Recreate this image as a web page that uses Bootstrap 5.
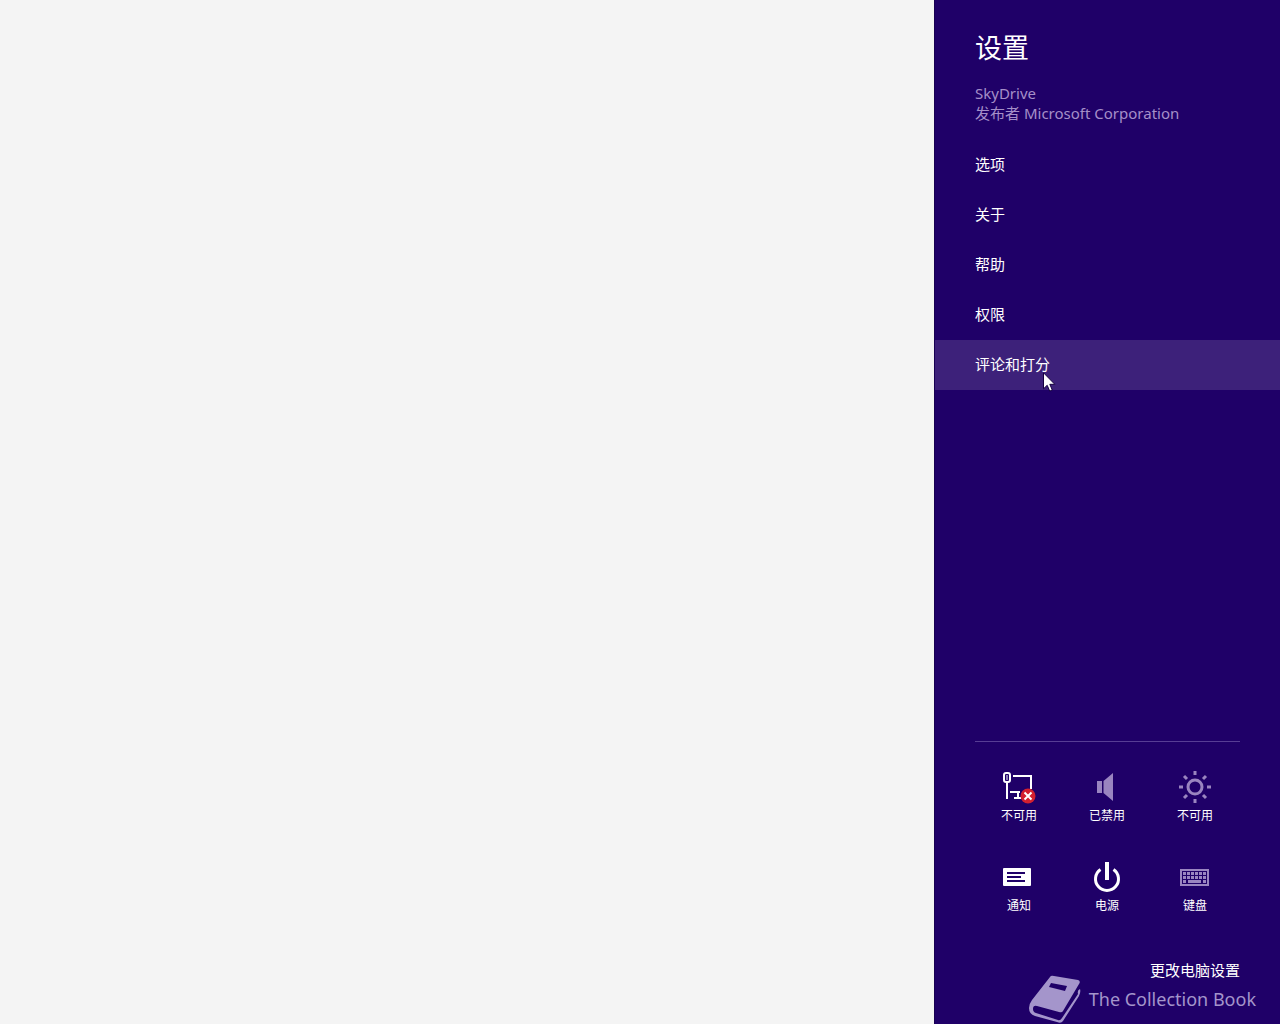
<!DOCTYPE html>
<html lang="zh-CN">
<head>
<meta charset="utf-8">
<meta name="viewport" content="width=device-width, initial-scale=1">
<title>设置</title>
<link href="https://cdn.jsdelivr.net/npm/bootstrap@5.3.0/dist/css/bootstrap.min.css" rel="stylesheet">
<style>
body{background:#f4f4f4;font-family:"Noto Sans","Noto Sans CJK SC",sans-serif;font-size:15px;line-height:20px}
.charm{width:346px;background:#1f0068;border-left:1px solid #180052;color:#fff}
.charm-head{height:140px;padding:28px 40px 0}
.charm-title{font-size:27px;line-height:40px;margin-bottom:15px;font-weight:400}
.publisher{color:#a58fc8}
.entry{height:50px;padding:0 40px 2px;color:#fff;text-decoration:none}
.entry:hover,.entry.active{background:#3d217a;color:#fff}
.quick{border-top:1px solid #573d94;padding-top:17px;margin:0 40px}
.tiles{padding-right:1px}
.tile{height:90px;padding:10px 0 0;background:none;border:0;color:#fff;font-size:12px;line-height:18px}
.tile svg{width:36px;height:36px;margin-bottom:2px}
.dim{color:#9a85c0}
.more{margin:21px 40px 44px;color:#fff;text-decoration:none}
.brandmark{right:24px;bottom:0;color:#a495cb;font-size:18px;line-height:24px;gap:8px}
.brandmark svg{width:52px;height:50px}
.pointer{left:108px;top:32px;width:13px;height:20px}
</style>
</head>
<body>
<div class="d-flex justify-content-end min-vh-100 overflow-hidden">
<aside class="charm d-flex flex-column position-relative" aria-label="设置">
<header class="charm-head">
<h1 class="charm-title">设置</h1>
<div class="publisher">SkyDrive</div>
<div class="publisher">发布者 Microsoft Corporation</div>
</header>
<nav class="d-flex flex-column">
<a class="entry d-flex align-items-center" href="#">选项</a>
<a class="entry d-flex align-items-center" href="#">关于</a>
<a class="entry d-flex align-items-center" href="#">帮助</a>
<a class="entry d-flex align-items-center" href="#">权限</a>
<a class="entry active d-flex align-items-center position-relative" href="#">评论和打分
<svg class="pointer position-absolute" viewBox="0 0 13 20" aria-hidden="true"><path d="M.5.8v16l3.7-3.500 2.500 5.800 2.600-1.100-2.500-5.700h5z" fill="#fff" stroke="#150040" stroke-width="1"/></svg></a>
</nav>
<section class="quick mt-auto">
<div class="tiles row row-cols-3 g-0">
<button type="button" class="tile col d-flex flex-column align-items-center">
<svg viewBox="0 0 36 36" fill="none" stroke="#fff" stroke-width="2" aria-hidden="true"><rect x="3" y="4" width="6" height="9" rx="2"/><path d="M6 13v17M12 7h18v13M9 23h10M17 23v6M13 29h7"/><path d="M6 6v5" stroke-width="1"/><circle cx="27" cy="27" r="7.500" fill="#d3202f" stroke="none"/><path d="m23.500 23.500 7 7m0-7-7 7"/></svg>不可用</button>
<button type="button" class="tile col d-flex flex-column align-items-center">
<svg class="dim" viewBox="0 0 36 36" fill="currentColor" aria-hidden="true"><path d="M8 12h5v12H8zM14.500 12 24 4v28l-9.500-8z"/></svg>已禁用</button>
<button type="button" class="tile col d-flex flex-column align-items-center">
<svg class="dim" viewBox="0 0 36 36" fill="none" stroke="currentColor" stroke-width="3" aria-hidden="true"><circle cx="18" cy="18" r="7"/><path d="M18 2v4M18 30v4M2 18h4M30 18h4M7 7l3 3M26 26l3 3M7 29l3-3M26 10l3-3"/></svg>不可用</button>
<button type="button" class="tile col d-flex flex-column align-items-center">
<svg viewBox="0 0 36 36" aria-hidden="true"><rect x="2" y="9" width="28" height="18" rx="1" fill="#fff"/><path d="M6 14h18M6 18h14M6 22h18" stroke="#1f0068" stroke-width="2"/></svg>通知</button>
<button type="button" class="tile col d-flex flex-column align-items-center">
<svg viewBox="0 0 36 36" fill="none" stroke="#fff" aria-hidden="true"><path d="M11.500 10.500a11.500 11.500 0 1 0 13 0" stroke-width="3"/><path d="M18 3v18" stroke-width="4"/></svg>电源</button>
<button type="button" class="tile col d-flex flex-column align-items-center">
<svg class="dim" viewBox="0 0 36 36" fill="none" stroke="currentColor" aria-hidden="true"><path d="M4 11h27v15H4z" stroke-width="2"/><path d="M6 14.500h23M6 18.500h23" stroke-width="3" stroke-dasharray="3 1"/><path d="M6 22.500h3M11 22.500h13M26 22.500h3" stroke-width="3"/></svg>键盘</button>
</div>
</section>
<a class="more align-self-end" href="#">更改电脑设置</a>
<div class="brandmark position-absolute d-flex align-items-center text-nowrap">
<svg viewBox="0 0 52 50" aria-hidden="true"><path d="M21 3q1-2 4-1l24 4q3 1 1 4L34 37q-1 2-4 1L8 32q-4-1-4 3 0 3 3 4l22 7q2 1 4-2l16-24q-1-4 2-5 1 3-1 7L34 47q-2 3-6 1L6 42q-6-2-6-8 0-4 3-8z" fill="currentColor"/><path d="m22 9 16 3-2 5-16-4z" fill="#1f0068"/></svg>
<span>The Collection Book</span></div>
</aside>
</div>
<script src="https://cdn.jsdelivr.net/npm/bootstrap@5.3.0/dist/js/bootstrap.bundle.min.js"></script>
</body>
</html>
